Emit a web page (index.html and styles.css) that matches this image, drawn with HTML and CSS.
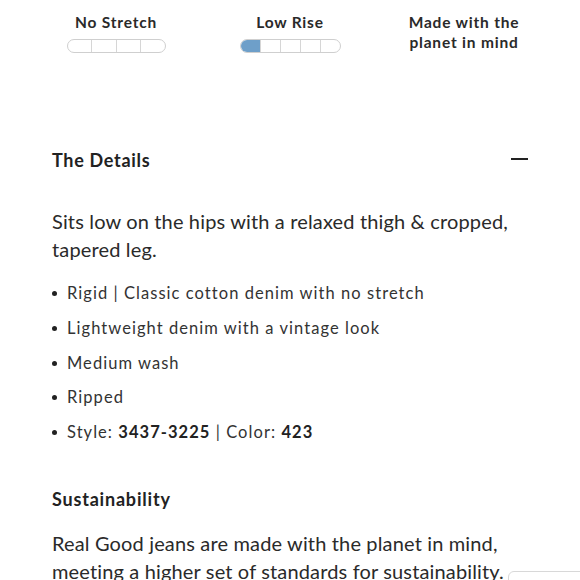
FILE: index.html
```html
<!DOCTYPE html>
<html lang="en">
<head>
<meta charset="utf-8">
<link rel="stylesheet" href="styles.css">
</head>
<body>
<div class="page">
  <div class="features">
    <div class="feature">
      <div class="feature-label">No Stretch</div>
      <div class="meter">
        <span class="seg"></span><span class="seg"></span><span class="seg"></span><span class="seg"></span>
      </div>
    </div>
    <div class="feature">
      <div class="feature-label">Low Rise</div>
      <div class="meter">
        <span class="seg on"></span><span class="seg"></span><span class="seg"></span><span class="seg"></span><span class="seg"></span>
      </div>
    </div>
    <div class="feature">
      <div class="feature-label">Made with the<br>planet in mind</div>
    </div>
  </div>

  <section class="details">
    <div class="details-head">
      <h2 class="title">The Details</h2>
      <span class="minus"></span>
    </div>
    <p class="lead">Sits low on the hips with a relaxed thigh &amp; cropped, tapered leg.</p>
    <ul class="bullets">
      <li>Rigid | Classic cotton denim with no stretch</li>
      <li>Lightweight denim with a vintage look</li>
      <li>Medium wash</li>
      <li>Ripped</li>
      <li>Style: <b>3437-3225</b> | Color: <b>423</b></li>
    </ul>
    <h3 class="subtitle">Sustainability</h3>
    <p class="lead">Real Good jeans are made with the planet in mind, meeting a higher set of standards for sustainability.</p>
  </section>
</div>
<div class="chat-peek"></div>
</body>
</html>
```
FILE: styles.css
```css
html, body {
  margin: 0;
  padding: 0;
  background: #fff;
  overflow: hidden;
}
body {
  font-family: "Lato", "Open Sans", sans-serif;
  color: #222;
}
.page {
  width: 580px;
}
.features {
  display: grid;
  grid-template-columns: repeat(3, 174px);
  padding: 12px 29px 0;
}
.feature {
  display: flex;
  flex-direction: column;
  align-items: center;
}
.feature-label {
  font-size: 15.5px;
  font-weight: 700;
  letter-spacing: 0.8px;
  line-height: 20px;
  text-align: center;
  color: #2a2a2a;
}
.meter {
  margin-top: 7px;
  display: flex;
  height: 12px;
  border: 1px solid #cfcfcf;
  border-radius: 7px;
  overflow: hidden;
}
.seg {
  width: 19px;
  border-left: 1px solid #d6d6d6;
}
.meter .seg:first-child {
  border-left: none;
}
.meter:has(.seg:nth-child(4):last-child) .seg {
  width: 23.5px;
}
.seg.on {
  background: #6e9fc9;
}
.details {
  padding: 0 52px;
  margin-top: 96px;
}
.details-head {
  display: flex;
  align-items: center;
  justify-content: space-between;
}
.title, .subtitle {
  margin: 0;
  font-size: 18px;
  font-weight: 700;
  letter-spacing: 0.7px;
  line-height: 22px;
}
.subtitle {
  letter-spacing: 0.8px;
}
.minus {
  width: 17px;
  height: 2px;
  background: #222;
  margin-top: -3px;
}
.lead {
  margin: 36px 0 0;
  font-size: 20px;
  letter-spacing: 0.15px;
  line-height: 28px;
  color: #2a2a2a;
}
.bullets {
  margin: 20px 0 0;
  padding: 0;
  list-style: none;
}
.bullets li {
  position: relative;
  padding-left: 15px;
  font-size: 16.5px;
  letter-spacing: 1.05px;
  line-height: 20px;
  margin-bottom: 14.8px;
  color: #333;
}
.bullets li::before {
  content: "";
  position: absolute;
  left: 0;
  top: 8px;
  width: 5px;
  height: 5px;
  border-radius: 50%;
  background: #222;
}
.bullets b {
  font-weight: 700;
  color: #222;
}
.subtitle {
  margin-top: 46px;
}
.details .subtitle + .lead {
  margin-top: 19px;
}
.chat-peek {
  position: fixed;
  left: 508px;
  top: 571px;
  width: 100px;
  height: 40px;
  border: 1px solid #d8d8d8;
  border-radius: 6px;
  background: #fff;
}
```
